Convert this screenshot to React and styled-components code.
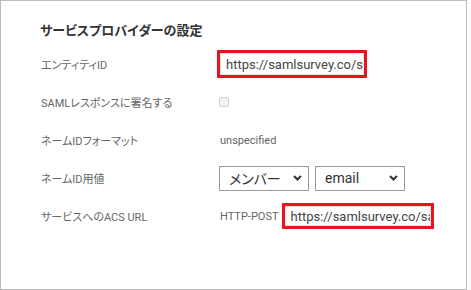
import React from "react";
import styled, { createGlobalStyle } from "styled-components";

const GlobalStyle = createGlobalStyle`
  html, body {
    margin: 0;
    padding: 0;
    background: #fff;
  }
  body {
    font-family: Roboto, "Noto Sans CJK JP", sans-serif;
    font-feature-settings: "palt";
  }
`;

const App = () => {
  return (
    <>
      <GlobalStyle />
      <Panel>
        <Title>サービスプロバイダーの設定</Title>
        <Form>
          <Label>エンティティID</Label>
          <Value>
            <Highlight $w={150} $h={28}>
              <TextInput readOnly value="https://samlsurvey.co/sa/metadata" />
            </Highlight>
          </Value>

          <Label>SAMLレスポンスに署名する</Label>
          <Value>
            <Check type="checkbox" disabled />
          </Value>

          <Label>ネームIDフォーマット</Label>
          <Value>
            <Plain>unspecified</Plain>
          </Value>

          <Label>ネームID用値</Label>
          <Value $gap={6}>
            <Select>
              <span>メンバー</span>
              <Chevron />
            </Select>
            <Select>
              <span>email</span>
              <Chevron />
            </Select>
          </Value>

          <Label>サービスへのACS URL</Label>
          <Value $gap={5}>
            <Plain>HTTP-POST</Plain>
            <Highlight $w={152} $h={26}>
              <TextInput readOnly value="https://samlsurvey.co/sa/acs" $cursor />
            </Highlight>
          </Value>
        </Form>
      </Panel>
    </>
  );
};

export default App;

const Chevron = () => (
  <svg width="9" height="6" viewBox="0 0 9 6">
    <path d="M1 1l3.5 3.5L8 1" fill="none" stroke="#333" strokeWidth="2" />
  </svg>
);

// Estilos
const Panel = styled.div`
  box-sizing: border-box;
  width: 467px;
  height: 290px;
  border: 1px solid #bdbdbd;
  padding: 21px 0 0 39px;
`;

const Title = styled.h2`
  margin: 0 0 10px;
  font-size: 13px;
  font-weight: 700;
  line-height: 18px;
  color: #333;
`;

const Form = styled.div`
  display: grid;
  grid-template-columns: 179px auto;
  grid-auto-rows: 28px;
  row-gap: 10px;
  align-items: center;
`;

const Label = styled.div`
  font-size: 11px;
  color: #666;
  padding-left: 1px;
`;

const Value = styled.div`
  display: flex;
  align-items: center;
  gap: ${(props) => props.$gap || 0}px;
`;

const Plain = styled.span`
  font-size: 11px;
  color: #666;
  padding-left: 1px;
`;

const Highlight = styled.div`
  box-sizing: border-box;
  width: ${(props) => props.$w}px;
  height: ${(props) => props.$h}px;
  border: 3px solid #e8131c;
  margin-left: -2px;
  display: flex;
`;

const TextInput = styled.input`
  box-sizing: border-box;
  flex: 1;
  min-width: 0;
  border: 1px solid #e2e2e2;
  border-left: ${(props) => (props.$cursor ? "1px solid #e2e2e2" : "1px solid #e2e2e2")};
  padding: 0 0 0 ${(props) => (props.$cursor ? 5 : 5)}px;
  font-family: Roboto, sans-serif;
  font-size: 13px;
  color: #444;
  outline: none;
  background: #fff;
  caret-color: #333;
`;

const Check = styled.input`
  appearance: none;
  margin: 0 0 0 0;
  width: 10px;
  height: 10px;
  border: 1px solid #d0d0d0;
  border-radius: 2px;
  background: #f4f4f4;
`;

const Select = styled.div`
  box-sizing: border-box;
  width: 90px;
  height: 25px;
  border: 1px solid #9a9a9a;
  display: flex;
  align-items: center;
  justify-content: space-between;
  padding: 0 6px 0 9px;
  font-size: 14px;
  color: #333;
`;
